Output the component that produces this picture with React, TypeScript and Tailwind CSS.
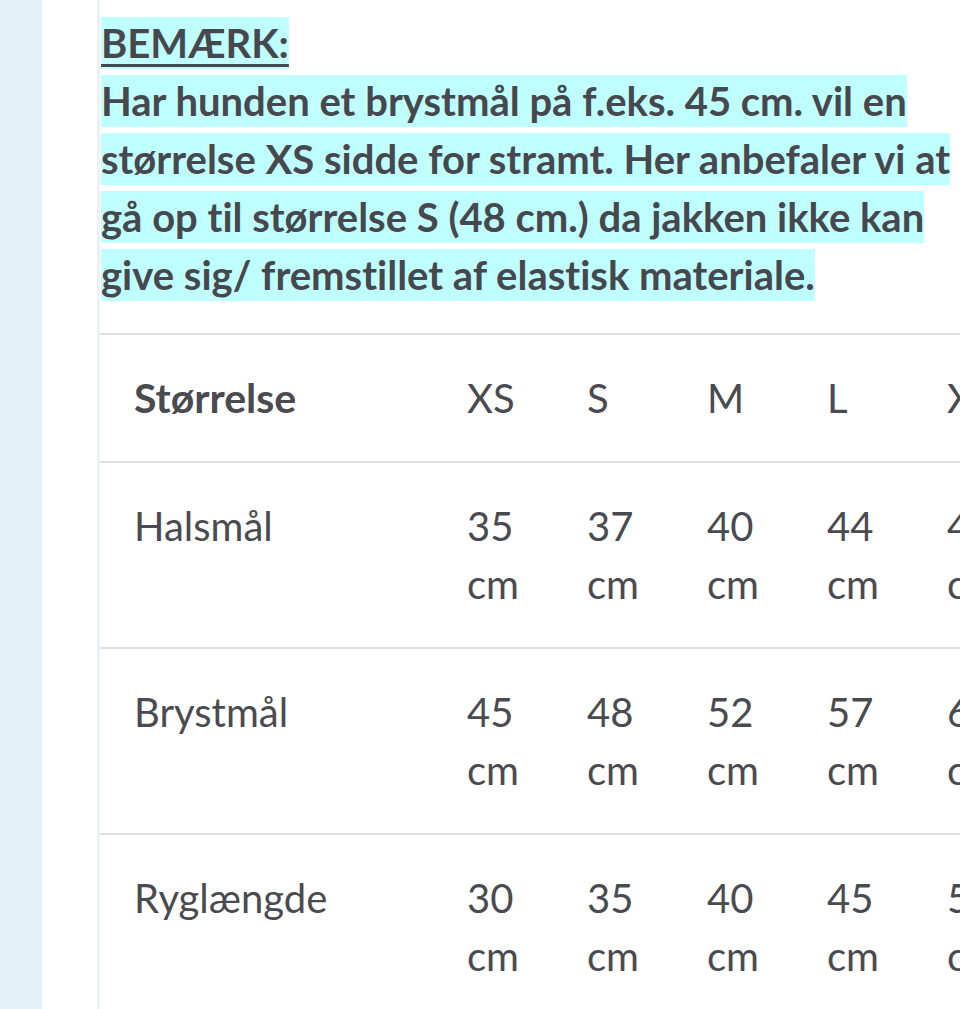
const sizes = ["XS", "S", "M", "L", "XL", "XXL"];

const rows = [
  { label: "Halsmål", values: [35, 37, 40, 44, 48, 52] },
  { label: "Brystmål", values: [45, 48, 52, 57, 62, 68] },
  { label: "Ryglængde", values: [30, 35, 40, 45, 50, 55] },
];

const lines = [
  "Har hunden et brystmål på f.eks. 45 cm. vil en",
  "størrelse XS sidde for stramt. Her anbefaler vi at",
  "gå op til størrelse S (48 cm.) da jakken ikke kan",
  "give sig/ fremstillet af elastisk materiale.",
];

const App = () => {
  return (
    <div className="w-[960px] h-[1009px] overflow-hidden flex bg-white font-['Lato',sans-serif] [font-variant-ligatures:none] text-[#46484e]">
      <div className="w-[42px] shrink-0 bg-[#e3f1f8]" />
      <div className="flex-1 pl-[55px]">
        <div className="border-l-[3px] border-[#edf1f6] min-h-full">
          <p className="pl-px pt-[14px] w-[862px] font-bold text-[40px] leading-[58px]">
            <span className="bg-[#c0ffff] py-[2px] box-decoration-clone underline decoration-[3px] underline-offset-[6px]">
              BEMÆRK:
            </span>
            <br />
            {lines.map((line, i) => (
              <span key={i}>
                <span className="bg-[#c0ffff] py-[2px] box-decoration-clone">{line}</span>
                {i < lines.length - 1 && <br />}
              </span>
            ))}
          </p>

          <table className="mt-[29px] table-fixed border-collapse w-[1052px] text-[40px] leading-[58px] text-[#4a4b50]">
            <colgroup>
              <col className="w-[332px]" />
              {sizes.map((s) => (
                <col key={s} className="w-[120px]" />
              ))}
            </colgroup>
            <thead>
              <tr className="border-t-2 border-b-2 border-[#dedede]">
                <th className="text-left font-bold text-[41px] pl-[34px] pr-4 py-[34px]">Størrelse</th>
                {sizes.map((s) => (
                  <td key={s} className="pl-[35px] pr-[25px] py-[34px] align-top">
                    {s}
                  </td>
                ))}
              </tr>
            </thead>
            <tbody>
              {rows.map((row) => (
                <tr key={row.label} className="border-b-2 border-[#dedede]">
                  <td className="pl-[34px] pr-4 py-[34px] align-top">{row.label}</td>
                  {row.values.map((v, i) => (
                    <td key={i} className="pl-[35px] pr-[25px] py-[34px] align-top">
                      {v} cm
                    </td>
                  ))}
                </tr>
              ))}
            </tbody>
          </table>
        </div>
      </div>
    </div>
  );
};

export default App;
